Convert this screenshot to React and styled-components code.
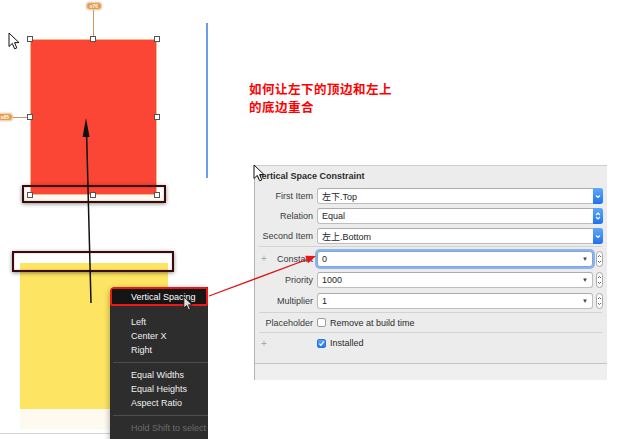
import React from "react";
import styled, { createGlobalStyle, css } from "styled-components";

const GlobalStyle = createGlobalStyle`
  html, body { margin: 0; padding: 0; background: #fff; }
  body {
    font-family: "Liberation Sans", Arial, "Noto Sans CJK SC", sans-serif;
    -webkit-font-smoothing: antialiased;
  }
  #root { width: 623px; height: 439px; }
`;

const Page = styled.div`
  position: relative;
  width: 623px;
  height: 439px;
  display: flex;
  overflow: hidden;
  background: #fff;
`;

/* ---------- Interface Builder canvas (free canvas) ---------- */
const Canvas = styled.div`
  position: relative;
  flex: none;
  width: 208px;
  height: 439px;
  overflow: hidden;
`;

const RedView = styled.div`
  position: absolute;
  left: 30px;
  top: 39px;
  width: 127px;
  height: 156px;
  box-sizing: border-box;
  background: #fb4535;
  border: 1px solid #f6b58a;
`;

const YellowView = styled.div`
  position: absolute;
  left: 20px;
  top: 263px;
  width: 148px;
  height: 146px;
  background: #fde462;
`;

const CreamStrip = styled.div`
  position: absolute;
  left: 20px;
  top: ${(p) => p.$y}px;
  width: 148px;
  height: ${(p) => p.$h}px;
  background: #fffaf0;
`;

const CanvasFloor = styled.div`
  position: absolute;
  left: 0;
  top: 433px;
  width: 208px;
  height: 1px;
  background: #d4d4d4;
`;

const GuideLine = styled.div`
  position: absolute;
  left: 206px;
  top: 23px;
  width: 2px;
  height: 155px;
  background: #6d9de9;
`;

const Handle = styled.div`
  position: absolute;
  left: ${(p) => p.$x - 3}px;
  top: ${(p) => p.$y - 3}px;
  width: 6px;
  height: 6px;
  box-sizing: border-box;
  background: #fff;
  border: 1px solid #555;
`;

const SelectionFrame = styled.div`
  position: absolute;
  left: ${(p) => p.$x}px;
  top: ${(p) => p.$y}px;
  width: ${(p) => p.$w}px;
  height: ${(p) => p.$h}px;
  box-sizing: border-box;
  border: 2px solid #3a0a0c;
  box-shadow: 0 1px 4px rgba(0, 0, 0, 0.45), inset 0 0 2px rgba(0, 0, 0, 0.3);
`;

const Badge = styled.div`
  position: absolute;
  left: ${(p) => p.$x}px;
  top: ${(p) => p.$y}px;
  width: 16px;
  height: 8px;
  box-sizing: border-box;
  border-radius: 4px;
  background: #e59a4a;
  border: 1px solid #f7d6ad;
  box-shadow: 0 0 2px rgba(0, 0, 0, 0.25);
  color: #fff;
  font-size: 5px;
  line-height: 6px;
  text-align: center;
  font-weight: 700;
`;

const ConstraintLine = styled.div`
  position: absolute;
  background: #cf9a5c;
  left: ${(p) => p.$x}px;
  top: ${(p) => p.$y}px;
  width: ${(p) => p.$w}px;
  height: ${(p) => p.$h}px;
`;

const CanvasOverlay = styled.svg`
  position: absolute;
  left: 0;
  top: 0;
  pointer-events: none;
`;

/* ---------- Context menu ---------- */
const Menu = styled.div`
  position: absolute;
  left: 110px;
  top: 287px;
  width: 98px;
  height: 160px;
  display: flex;
  flex-direction: column;
  background: #2d2d2d;
  border-radius: 5px 0 0 5px;
  box-shadow: 0 2px 6px rgba(0, 0, 0, 0.35);
  font-size: 9px;
  white-space: nowrap;
  overflow: hidden;
`;

const MenuHighlight = styled.div`
  height: 19px;
  box-sizing: border-box;
  border: 2px solid #ea1a1a;
  border-radius: 2px;
  background: #151515;
  color: #fff;
  display: flex;
  align-items: center;
  padding-left: 19px;
  margin-bottom: 9px;
`;

const MenuItem = styled.div`
  height: 14px;
  line-height: 14px;
  padding-left: 21px;
  color: ${(p) => (p.$disabled ? "#6c6c6c" : "#f0f0f0")};
`;

const MenuSep = styled.div`
  height: 1px;
  margin: 5px 0 5px 3px;
  background: #4c4c4c;
`;

/* ---------- Right side ---------- */
const Right = styled.div`
  flex: 1;
  display: flex;
  flex-direction: column;
  padding-top: 80px;
`;

const Note = styled.div`
  margin-left: 41px;
  display: flex;
  flex-direction: column;
  font-family: "Noto Sans CJK SC", sans-serif;
  font-weight: 700;
  font-size: 12.5px;
  letter-spacing: 0.5px;
  color: #ff0000;
  white-space: nowrap;
`;

const NoteLine = styled.div`
  line-height: 18.2px;
`;

const Panel = styled.div`
  margin-top: 48.6px;
  margin-left: 46px;
  width: 353px;
  height: 215px;
  box-sizing: border-box;
  border-top: 1px solid #cdcdcd;
  border-left: 1px solid #b3b3b3;
  background: #ececec;
  display: flex;
  flex-direction: column;
  font-size: 9px;
  color: #333;
`;

const PanelHeader = styled.div`
  height: 20px;
  flex: none;
  display: flex;
  align-items: center;
  padding-left: 1px;
  font-weight: 700;
  color: #2b2b2b;
`;

const Group = styled.div`
  display: flex;
  flex-direction: column;
  padding: ${(p) => p.$pad || "0"};
`;

const Row = styled.div`
  display: grid;
  grid-template-columns: 58px 1fr;
  column-gap: 4px;
  align-items: center;
  height: ${(p) => p.$h}px;
  padding-right: 4px;
`;

const LabelCell = styled.div`
  display: flex;
  align-items: center;
  justify-content: flex-end;
  color: #3a3a3a;
  white-space: nowrap;
`;

const Plus = styled.span`
  margin-right: auto;
  padding-left: 6px;
  color: #a8a8a8;
  font-size: 10px;
`;

const Field = styled.div`
  flex: 1;
  height: 16px;
  box-sizing: border-box;
  border: 1px solid #bdbdbd;
  border-top-color: #acacac;
  border-radius: 3px;
  background: #fff;
  display: flex;
  align-items: center;
  color: #1e1e1e;
  ${(p) =>
    p.$focus &&
    css`
      box-shadow: 0 0 0 2px #8db3ea;
      border-color: #7da6e0;
    `}
`;

const FieldText = styled.span`
  flex: 1;
  padding-left: 4px;
  white-space: nowrap;
`;

const PopupButton = styled.div`
  width: 10px;
  align-self: stretch;
  margin: -1px -1px -1px 0;
  border-radius: 0 3px 3px 0;
  background: linear-gradient(#5ea8fb, #1e72ee);
  display: flex;
  align-items: center;
  justify-content: center;
`;

const ComboArrow = styled.span`
  font-size: 6px;
  color: #444;
  margin-right: 4px;
`;

const ComboWrap = styled.div`
  display: flex;
  align-items: center;
  gap: 3px;
`;

const Stepper = styled.div`
  width: 7px;
  height: 16px;
  box-sizing: border-box;
  border: 1px solid #a9a9a9;
  border-radius: 4px;
  background: #fff;
  display: flex;
  align-items: center;
  justify-content: center;
`;

const CheckRow = styled.div`
  display: flex;
  align-items: center;
  gap: 4px;
  color: #2a2a2a;
`;

const CheckBox = styled.div`
  width: 9px;
  height: 9px;
  box-sizing: border-box;
  border-radius: 2px;
  border: 1px solid ${(p) => (p.$on ? "#2d72d8" : "#9d9d9d")};
  background: ${(p) => (p.$on ? "linear-gradient(#5aa4fa, #2677ee)" : "#fff")};
  display: flex;
  align-items: center;
  justify-content: center;
`;

const Sep = styled.div`
  height: 1px;
  flex: none;
  margin: 0 5px 0 4px;
  background: #d3d3d3;
`;

const Filler = styled.div`
  flex: 1;
`;

const PanelFooter = styled.div`
  height: 16px;
  flex: none;
  border-top: 1px solid #c4c4c4;
  background: #efefef;
`;

const Overlay = styled.svg`
  position: absolute;
  left: 0;
  top: 0;
  pointer-events: none;
`;

const Cursor = styled.svg`
  position: absolute;
  left: ${(p) => p.$x}px;
  top: ${(p) => p.$y}px;
  pointer-events: none;
`;

/* ---------- small drawings ---------- */
const ChevronDown = () => (
  <svg width="6" height="5" viewBox="0 0 6 5">
    <path d="M1 1.5 L3 3.5 L5 1.5" fill="none" stroke="#fff" strokeWidth="1.1" />
  </svg>
);

const ChevronUpDown = () => (
  <svg width="6" height="10" viewBox="0 0 6 10">
    <path d="M1 4 L3 2 L5 4" fill="none" stroke="#fff" strokeWidth="1.1" />
    <path d="M1 6 L3 8 L5 6" fill="none" stroke="#fff" strokeWidth="1.1" />
  </svg>
);

const StepperGlyph = () => (
  <svg width="5" height="12" viewBox="0 0 5 12">
    <path d="M1 4 L2.5 2.5 L4 4" fill="none" stroke="#555" strokeWidth="0.9" />
    <path d="M1 8 L2.5 9.5 L4 8" fill="none" stroke="#555" strokeWidth="0.9" />
  </svg>
);

const CheckMark = () => (
  <svg width="7" height="7" viewBox="0 0 7 7">
    <path d="M1.2 3.6 L2.9 5.3 L5.9 1.4" fill="none" stroke="#fff" strokeWidth="1.3" />
  </svg>
);

const ArrowCursor = ({ x, y, w = 12, h = 18, fill = "#fff" }) => (
  <Cursor $x={x} $y={y} width={w} height={h} viewBox="0 0 12 18">
    <path
      d="M1 1 L1 14.5 L4.3 11.4 L6.6 16.8 L8.8 15.9 L6.6 10.6 L11 10.6 Z"
      fill={fill}
      stroke="#111"
      strokeWidth="1"
      strokeLinejoin="round"
    />
  </Cursor>
);

const ComboRow = ({ label, value, focus, plus }) => (
  <Row $h={21}>
    <LabelCell>
      {plus && <Plus>+</Plus>}
      {label}
    </LabelCell>
    <ComboWrap>
      <Field $focus={focus}>
        <FieldText>{value}</FieldText>
        <ComboArrow>▼</ComboArrow>
      </Field>
      <Stepper>
        <StepperGlyph />
      </Stepper>
    </ComboWrap>
  </Row>
);

const PopupRow = ({ label, value, both }) => (
  <Row $h={20}>
    <LabelCell>{label}</LabelCell>
    <Field>
      <FieldText>{value}</FieldText>
      <PopupButton>{both ? <ChevronUpDown /> : <ChevronDown />}</PopupButton>
    </Field>
  </Row>
);

export default function App() {
  return (
    <>
      <GlobalStyle />
      <Page>
        <Canvas>
          <RedView />
          <CreamStrip $y={195} $h={6} />
          <YellowView />
          <CreamStrip $y={409} $h={20} />
          <CanvasFloor />
          <GuideLine />

          <ConstraintLine $x={93} $y={10} $w={1} $h={27} />
          <ConstraintLine $x={13} $y={117} $w={15} $h={1} />
          <Badge $x={86} $y={2}>≥76</Badge>
          <Badge $x={-3} $y={113}>≥85</Badge>

          {[
            [30, 39], [93, 39], [157, 39],
            [30, 117], [157, 117],
            [30, 195], [93, 195], [157, 195],
          ].map(([x, y]) => (
            <Handle key={`${x}-${y}`} $x={x} $y={y} />
          ))}

          <SelectionFrame $x={22} $y={185} $w={144} $h={18} />
          <SelectionFrame $x={12} $y={251} $w={162} $h={21} />

          <CanvasOverlay width="208" height="439" viewBox="0 0 208 439">
            <line x1="91" y1="303" x2="86.6" y2="134" stroke="#111" strokeWidth="1.5" />
            <polygon points="86,118 82.6,137 89.6,137" fill="#111" />
          </CanvasOverlay>

          <ArrowCursor x={8} y={32} />

          <Menu>
            <MenuHighlight>Vertical Spacing</MenuHighlight>
            <MenuItem>Left</MenuItem>
            <MenuItem>Center X</MenuItem>
            <MenuItem>Right</MenuItem>
            <MenuSep />
            <MenuItem>Equal Widths</MenuItem>
            <MenuItem>Equal Heights</MenuItem>
            <MenuItem>Aspect Ratio</MenuItem>
            <MenuSep />
            <MenuItem $disabled>Hold Shift to select</MenuItem>
          </Menu>
          <ArrowCursor x={183} y={296} w={10} h={15} fill="#ddd" />
        </Canvas>

        <Right>
          <Note>
            <NoteLine>如何让左下的顶边和左上</NoteLine>
            <NoteLine>的底边重合</NoteLine>
          </Note>

          <Panel>
            <PanelHeader>Vertical Space Constraint</PanelHeader>
            <Group>
              <PopupRow label="First Item" value="左下.Top" />
              <PopupRow label="Relation" value="Equal" both />
              <PopupRow label="Second Item" value="左上.Bottom" />
            </Group>
            <Sep />
            <Group $pad="1px 0">
              <ComboRow label="Constant" value="0" focus plus />
              <ComboRow label="Priority" value="1000" />
              <ComboRow label="Multiplier" value="1" />
            </Group>
            <Sep />
            <Row $h={19}>
              <LabelCell>Placeholder</LabelCell>
              <CheckRow>
                <CheckBox />
                Remove at build time
              </CheckRow>
            </Row>
            <Sep />
            <Row $h={20}>
              <LabelCell>
                <Plus>+</Plus>
              </LabelCell>
              <CheckRow>
                <CheckBox $on>
                  <CheckMark />
                </CheckBox>
                Installed
              </CheckRow>
            </Row>
            <Filler />
            <PanelFooter />
          </Panel>
        </Right>

        <Overlay width="623" height="439" viewBox="0 0 623 439">
          <line x1="209" y1="296" x2="307" y2="259.5" stroke="#e01010" strokeWidth="1.2" />
          <polygon points="316,256 308,263.3 305.2,255.8" fill="#e81818" />
        </Overlay>
        <ArrowCursor x={253} y={164} />
      </Page>
    </>
  );
}
